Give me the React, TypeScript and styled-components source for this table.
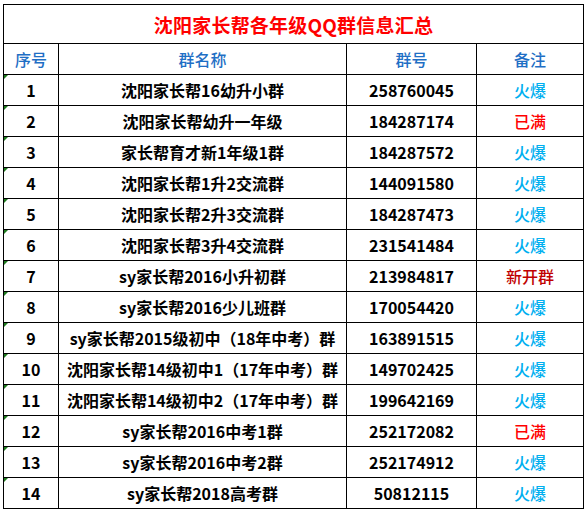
import styled, { createGlobalStyle } from "styled-components";

type Note = "hot" | "full" | "new";

type GroupRow = {
  name: string;
  number: string;
  note: Note;
};

const rows: GroupRow[] = [
  { name: "沈阳家长帮16幼升小群", number: "258760045", note: "hot" },
  { name: "沈阳家长帮幼升一年级", number: "184287174", note: "full" },
  { name: "家长帮育才新1年级1群", number: "184287572", note: "hot" },
  { name: "沈阳家长帮1升2交流群", number: "144091580", note: "hot" },
  { name: "沈阳家长帮2升3交流群", number: "184287473", note: "hot" },
  { name: "沈阳家长帮3升4交流群", number: "231541484", note: "hot" },
  { name: "sy家长帮2016小升初群", number: "213984817", note: "new" },
  { name: "sy家长帮2016少儿班群", number: "170054420", note: "hot" },
  { name: "sy家长帮2015级初中（18年中考）群", number: "163891515", note: "hot" },
  { name: "沈阳家长帮14级初中1（17年中考）群", number: "149702425", note: "hot" },
  { name: "沈阳家长帮14级初中2（17年中考）群", number: "199642169", note: "hot" },
  { name: "sy家长帮2016中考1群", number: "252172082", note: "full" },
  { name: "sy家长帮2016中考2群", number: "252174912", note: "hot" },
  { name: "sy家长帮2018高考群", number: "50812115", note: "hot" },
];

const noteText: Record<Note, string> = {
  hot: "火爆",
  full: "已满",
  new: "新开群",
};

const noteColor: Record<Note, string> = {
  hot: "#00aff0",
  full: "#ff0000",
  new: "#c00000",
};

export default function App() {
  return (
    <>
      <GlobalStyle />
      <Sheet>
        <Title>沈阳家长帮各年级QQ群信息汇总</Title>
        <HeadCell>序号</HeadCell>
        <HeadCell>群名称</HeadCell>
        <HeadCell>群号</HeadCell>
        <HeadCell>备注</HeadCell>
        {rows.map((row, i) => (
          <Row key={row.number}>
            <IndexCell>{i + 1}</IndexCell>
            <Cell>{row.name}</Cell>
            <Cell>{row.number}</Cell>
            <NoteCell $note={row.note}>{noteText[row.note]}</NoteCell>
          </Row>
        ))}
      </Sheet>
    </>
  );
}

const GlobalStyle = createGlobalStyle`
  html, body {
    margin: 0;
    background: #ffffff;
  }

  body {
    font-family: "Noto Sans CJK SC", "Noto Sans", sans-serif;
    color: #000000;
  }
`;

const Sheet = styled.div`
  display: grid;
  grid-template-columns: 54px 287px 129px 106px;
  grid-template-rows: 38px;
  grid-auto-rows: 30px;
  gap: 1px;
  width: max-content;
  margin: 4px 0 0 3px;
  border: 1px solid #000000;
  background: #000000;
`;

const Title = styled.div`
  grid-column: 1 / -1;
  display: flex;
  align-items: center;
  justify-content: center;
  background: #ffffff;
  color: #ff0000;
  font-size: 19px;
  font-weight: 700;
  letter-spacing: 0.2px;
`;

const Row = styled.div`
  display: contents;
`;

const Cell = styled.div`
  display: flex;
  align-items: center;
  justify-content: center;
  background: #ffffff;
  font-size: 16px;
  font-weight: 700;
  white-space: nowrap;
  line-height: 1;
`;

const HeadCell = styled(Cell)`
  color: #1f6fc5;
  font-weight: 500;
  font-size: 16px;
`;

const IndexCell = styled(Cell)`
  position: relative;

  &::before {
    content: "";
    position: absolute;
    top: 0;
    left: 0;
    border-top: 4px solid #1f7a1f;
    border-right: 4px solid transparent;
  }
`;

const NoteCell = styled(Cell)<{ $note: Note }>`
  color: ${(p) => noteColor[p.$note]};
  font-weight: 500;
`;
